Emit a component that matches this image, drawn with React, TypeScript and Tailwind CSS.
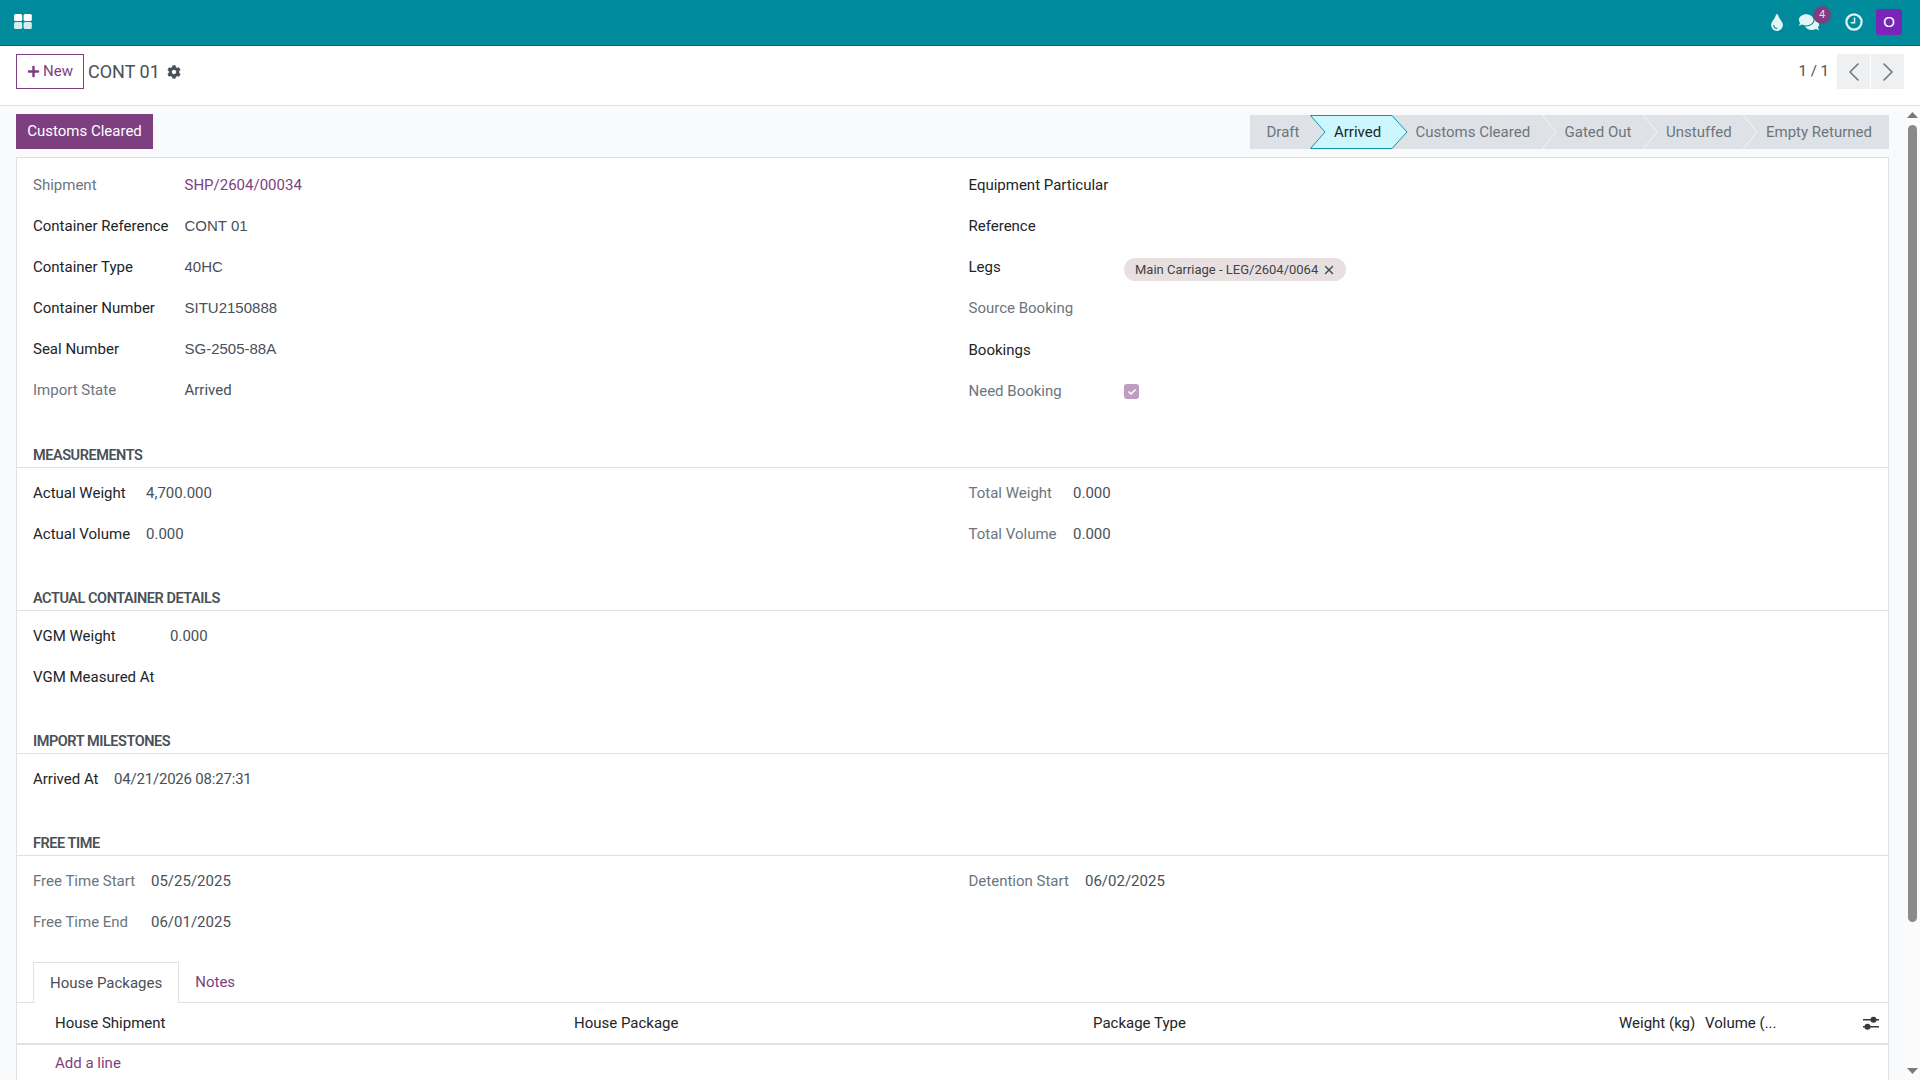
// App.tsx
import { ChevronLeft, ChevronRight, X } from "lucide-react";
import { FaCheck, FaCog, FaComments, FaPlus, FaTint } from "react-icons/fa";

const stages = [
  { label: "Draft", width: "w-[60px]", pad: "pl-[16.5px]" },
  { label: "Arrived", width: "w-[82px]", pad: "pl-[24px]", active: true },
  { label: "Customs Cleared", width: "w-[150px]", pad: "pl-[23.5px]", sep: true },
  { label: "Gated Out", width: "w-[101px]", pad: "pl-[22.5px]", sep: true },
  { label: "Unstuffed", width: "w-[100px]", pad: "pl-[23px]", sep: true },
  { label: "Empty Returned", width: "w-[146px]", pad: "pl-[23px]" },
];

const charValue = "text-[#495057] font-['Liberation_Sans',sans-serif] text-[15px]";

function Label({ children, muted }: { children: React.ReactNode; muted?: boolean }) {
  return <span className={muted ? "text-[#6c757d]" : "text-[#212529]"}>{children}</span>;
}

function Field({
  label,
  muted,
  value,
  width,
  className = "text-[#495057]",
}: {
  label: string;
  muted?: boolean;
  value?: React.ReactNode;
  width: string;
  className?: string;
}) {
  return (
    <div className="flex items-center h-[41px]">
      <div className={`${width} shrink-0`}>
        <Label muted={muted}>{label}</Label>
      </div>
      <div className={className}>{value}</div>
    </div>
  );
}

function Section({ title }: { title: string }) {
  return (
    <div className="h-[22px] border-b border-[#dee2e6] pl-[16px] flex items-start">
      <span className="font-semibold text-[14.5px] leading-[20px] text-[#495057] tracking-[-0.45px]">{title}</span>
    </div>
  );
}

function AppsIcon() {
  return (
    <svg width="18" height="15" viewBox="0 0 18 15">
      <rect x="0" y="0" width="8.2" height="7" rx="1.5" fill="#ffffff" />
      <rect x="9.6" y="0" width="8.2" height="7" rx="1.5" fill="#ffffff" />
      <rect x="0" y="8" width="8.2" height="7" rx="1.5" fill="#d4eef0" />
      <rect x="9.6" y="8" width="8.2" height="7" rx="1.5" fill="#d4eef0" />
    </svg>
  );
}

function ClockIcon() {
  return (
    <svg width="18" height="18" viewBox="0 0 18 18" fill="none" stroke="#e3f6f7">
      <circle cx="9" cy="9" r="7.6" strokeWidth="2.2" />
      <path d="M9.5 4.5V9.8H5.8" strokeWidth="1.5" />
    </svg>
  );
}

function SlidersIcon() {
  return (
    <svg width="16" height="14" viewBox="0 0 16 14" fill="#343a40">
      <rect x="0" y="3" width="16" height="1.5" />
      <rect x="0" y="10" width="16" height="1.5" />
      <circle cx="10.5" cy="3.7" r="3" />
      <circle cx="4.5" cy="10.7" r="3" />
    </svg>
  );
}

function Statusbar() {
  return (
    <div className="flex h-[34px] bg-[#dee2e6] text-[15px]">
      {stages.map((s) => (
        <div key={s.label} className={`relative flex items-center shrink-0 ${s.width} ${s.pad}`}>
          {s.active && (
            <svg className="absolute left-0 top-0" width="98" height="34" viewBox="0 0 98 34">
              <polygon points="0.5,0.5 82,0.5 97,17 82,33.5 0.5,33.5 15,17" fill="#ccf7ff" stroke="#0d96a6" />
            </svg>
          )}
          {s.sep && (
            <svg className="absolute right-[-15px] top-0 z-10" width="15" height="34" viewBox="0 0 15 34">
              <polyline points="0,0 14,17 0,34" fill="none" stroke="#f4f5f7" />
            </svg>
          )}
          <span className={`relative whitespace-nowrap ${s.active ? "text-[#212529]" : "text-[#6c757d]"}`}>{s.label}</span>
        </div>
      ))}
    </div>
  );
}

export default function App() {
  return (
    <div className="h-screen w-full flex flex-col overflow-hidden bg-white text-[15px] font-['Roboto',sans-serif] text-[#212529]">
      {/* top nav */}
      <header className="h-[46px] shrink-0 bg-[#008b9c] border-b border-[#006b78] flex items-center justify-between pl-[14px] pr-[18px]">
        <div className="mt-[-2px]">
          <AppsIcon />
        </div>
        <div className="flex items-center text-[#e3f6f7] mt-[-1px]">
          <FaTint className="w-[14px] h-[17px]" />
          <div className="relative ml-[14px]">
            <FaComments className="w-[22px] h-[18px]" />
            <span className="absolute left-[15px] top-[-7px] w-[18px] h-[18px] rounded-full bg-[#7d3f80] text-[#e5dbe6] text-[11px] flex items-center justify-center">
              4
            </span>
          </div>
          <div className="ml-[25px] h-[18px]">
            <ClockIcon />
          </div>
          <div className="ml-[13px] w-[26px] h-[26px] rounded-[3px] bg-[#7a24b8] text-white text-[15px] font-['Liberation_Sans',sans-serif] flex items-center justify-center">
            O
          </div>
        </div>
      </header>

      {/* control panel */}
      <div className="h-[60px] shrink-0 border-b border-[#dee2e6] flex items-start justify-between pl-[16px] pr-[16px] pt-[8px]">
        <div className="flex items-center">
          <button className="w-[68px] h-[35px] border border-[#7d3f80] text-[#7d3f80] flex items-center justify-center gap-[3px] text-[15px]">
            <FaPlus className="w-[13px] h-[13px]" />
            New
          </button>
          <span className="ml-[4px] text-[18px] text-[#495057]">CONT 01</span>
          <FaCog className="ml-[7px] w-[14px] h-[14px] text-[#495057]" />
        </div>
        <div className="flex items-center">
          <span className="mr-[8px] text-[#495057]">1 / 1</span>
          <div className="w-[33px] h-[35px] bg-[#eff0f2] flex items-center justify-center text-[#6c757d]">
            <ChevronLeft size={32} strokeWidth={1.2} />
          </div>
          <div className="ml-[1px] w-[33px] h-[35px] bg-[#eff0f2] flex items-center justify-center text-[#6c757d]">
            <ChevronRight size={32} strokeWidth={1.2} />
          </div>
        </div>
      </div>

      {/* scroll area */}
      <div className="flex-1 min-h-0 flex bg-[#f9fafb]">
        <div className="flex-1 min-w-0 pl-[16px] pr-[16px] pt-[8px]">
          <div className="flex items-start justify-between h-[43px]">
            <button className="w-[137px] h-[35px] bg-[#7d3f80] text-white text-[15px]">Customs Cleared</button>
            <div className="mt-[1px]">
              <Statusbar />
            </div>
          </div>

          <div className="bg-white border border-[#dee2e6] h-[1000px] pt-[7px]">
            {/* main fields */}
            <div className="grid grid-cols-[935.5px_1fr] pl-[16px]">
              <div>
                <Field label="Shipment" muted width="w-[151.5px]" value="SHP/2604/00034" className="text-[#7d3f80]" />
                <Field label="Container Reference" width="w-[151.5px]" value="CONT 01" className={charValue} />
                <Field label="Container Type" width="w-[151.5px]" value="40HC" className={charValue} />
                <Field label="Container Number" width="w-[151.5px]" value="SITU2150888" className={charValue} />
                <Field label="Seal Number" width="w-[151.5px]" value="SG-2505-88A" className={charValue} />
                <Field label="Import State" muted width="w-[151.5px]" value="Arrived" />
              </div>
              <div>
                <Field label="Equipment Particular" width="w-[155.5px]" />
                <Field label="Reference" width="w-[155.5px]" />
                <Field
                  label="Legs"
                  width="w-[155.5px]"
                  value={
                    <span className="mt-[4px] inline-flex items-center h-[23px] pl-[11px] pr-[10px] rounded-full bg-[#e8e0e0] text-[13px] text-[#3d4348]">
                      Main Carriage - LEG/2604/0064
                      <X size={14} strokeWidth={2.5} className="ml-[4px] text-[#495057]" />
                    </span>
                  }
                />
                <Field label="Source Booking" muted width="w-[155.5px]" />
                <div className="mt-[1px]">
                  <Field label="Bookings" width="w-[155.5px]" />
                </div>
                <Field
                  label="Need Booking"
                  muted
                  width="w-[155.5px]"
                  value={
                    <span className="flex items-center justify-center w-[15px] h-[15px] rounded-[3px] bg-[#bf9cc1]">
                      <FaCheck className="w-[8px] h-[8px] text-white" />
                    </span>
                  }
                />
              </div>
            </div>

            <div className="mt-[34px]">
              <Section title="MEASUREMENTS" />
            </div>
            <div className="grid grid-cols-[935.5px_1fr] pl-[16px] mt-[5px]">
              <div>
                <Field label="Actual Weight" width="w-[113px]" value="4,700.000" />
                <Field label="Actual Volume" width="w-[113px]" value="0.000" />
              </div>
              <div>
                <Field label="Total Weight" muted width="w-[104.5px]" value="0.000" />
                <Field label="Total Volume" muted width="w-[104.5px]" value="0.000" />
              </div>
            </div>

            <div className="mt-[34px]">
              <Section title="ACTUAL CONTAINER DETAILS" />
            </div>
            <div className="pl-[16px] mt-[5px]">
              <Field label="VGM Weight" width="w-[137px]" value="0.000" />
              <Field label="VGM Measured At" width="w-[137px]" />
            </div>

            <div className="mt-[34px]">
              <Section title="IMPORT MILESTONES" />
            </div>
            <div className="pl-[16px] mt-[5px]">
              <Field label="Arrived At" width="w-[81px]" value="04/21/2026 08:27:31" className="text-[#495057] tracking-[-0.2px]" />
            </div>

            <div className="mt-[34px]">
              <Section title="FREE TIME" />
            </div>
            <div className="grid grid-cols-[935.5px_1fr] pl-[16px] mt-[5px]">
              <div>
                <Field label="Free Time Start" muted width="w-[118px]" value="05/25/2025" />
                <Field label="Free Time End" muted width="w-[118px]" value="06/01/2025" />
              </div>
              <div>
                <Field label="Detention Start" muted width="w-[116.5px]" value="06/02/2025" />
              </div>
            </div>

            {/* tabs */}
            <div className="mt-[19px] h-[41px] border-b border-[#dee2e6] pl-[16px] flex items-end">
              <div className="h-[41px] mb-[-1px] px-[16px] flex items-center border border-b-0 border-[#dee2e6] bg-white text-[#495057]">
                House Packages
              </div>
              <div className="h-[40px] px-[16px] flex items-center text-[#7d3f80]">Notes</div>
            </div>

            {/* list */}
            <div className="relative h-[42px] border-b-2 border-[#dee2e6] grid grid-cols-[519px_519px_526px_86px_1fr] items-center pl-[38px]">
              <span>House Shipment</span>
              <span>House Package</span>
              <span>Package Type</span>
              <span>Weight (kg)</span>
              <span>Volume (...</span>
              <div className="absolute right-[9px] top-[13px]">
                <SlidersIcon />
              </div>
            </div>
            <div className="pl-[38px] pt-[7px] text-[#7d3f80]">Add a line</div>
          </div>
        </div>

        {/* page scrollbar */}
        <div className="w-[15px] shrink-0 flex flex-col items-center bg-[#fbfbfc] pt-[6px] pb-[6px]">
          <svg width="11" height="6" viewBox="0 0 11 6" fill="#7a7a7a">
            <polygon points="5.5,0 11,6 0,6" />
          </svg>
          <div className="mt-[7px] w-[9px] h-[797px] rounded-full bg-[#8a8a8a]" />
          <div className="flex-1" />
          <svg width="11" height="6" viewBox="0 0 11 6" fill="#7a7a7a">
            <polygon points="0,0 11,0 5.5,6" />
          </svg>
        </div>
      </div>
    </div>
  );
}
